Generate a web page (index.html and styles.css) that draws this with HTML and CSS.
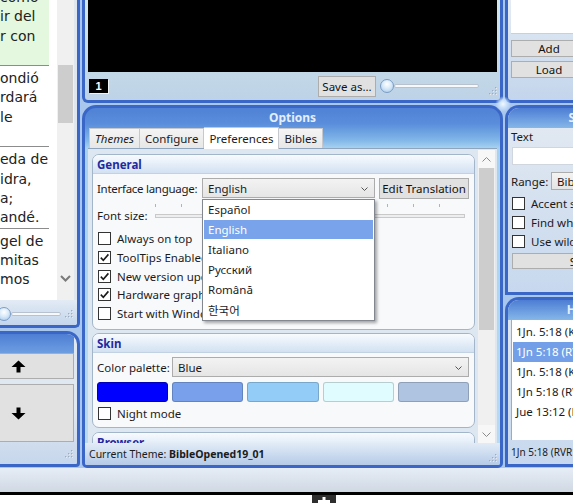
FILE: index.html
```html
<!DOCTYPE html>
<html>
<head>
<meta charset="utf-8">
<link rel="stylesheet" href="styles.css">
</head>
<body>
<div class="app">
  <div class="col col-left">
    <section class="panel p-verses">
      <div class="verses-area">
        <div class="verses-clip">
          <div class="verses">
            <div class="verse current"><div>como</div><div>ir del</div><div>r con</div><div>&nbsp;</div></div>
            <div class="verse"><div>ondió</div><div>rdará</div><div>le</div><div>&nbsp;</div></div>
            <div class="verse"><div>eda de</div><div>idra,</div><div>a;</div><div>andé.</div></div>
            <div class="verse last"><div>gel de</div><div>mitas</div><div>mos</div></div>
          </div>
        </div>
        <div class="vscroll">
          <div class="vthumb"></div>
          <svg class="vdown" width="11" height="7" viewBox="0 0 11 7"><path d="M1 1 L5.5 5.5 L10 1" fill="none" stroke="#7a7a7a" stroke-width="2"/></svg>
        </div>
      </div>
      <div class="slider-strip">
        <div class="knob knob-left"></div>
        <div class="track track-left"></div>
        <svg class="grip" width="9" height="9" viewBox="0 0 9 9"><g fill="#fff"><rect x="7.5" y="1.5" width="1.5" height="1.5"/><rect x="7.5" y="4.5" width="1.5" height="1.5"/><rect x="4.5" y="4.5" width="1.5" height="1.5"/><rect x="7.5" y="7.5" width="1.5" height="1.5"/><rect x="4.5" y="7.5" width="1.5" height="1.5"/><rect x="1.5" y="7.5" width="1.5" height="1.5"/></g><g fill="#9aabc2"><rect x="7" y="1" width="1.5" height="1.5"/><rect x="7" y="4" width="1.5" height="1.5"/><rect x="4" y="4" width="1.5" height="1.5"/><rect x="7" y="7" width="1.5" height="1.5"/><rect x="4" y="7" width="1.5" height="1.5"/><rect x="1" y="7" width="1.5" height="1.5"/></g></svg>
      </div>
    </section>
    <section class="panel p-nav">
      <div class="nav-head"></div>
      <button class="btn nav-btn">
        <svg width="15" height="13" viewBox="0 0 15 13"><path d="M7.5 0.5 L14.5 7 L9.5 7 L9.5 12.5 L5.5 12.5 L5.5 7 L0.5 7 Z" fill="#000"/></svg>
      </button>
      <button class="btn nav-btn nav-down">
        <svg width="15" height="13" viewBox="0 0 15 13"><path d="M7.5 12.5 L14.5 6 L9.5 6 L9.5 0.5 L5.5 0.5 L5.5 6 L0.5 6 Z" fill="#000"/></svg>
      </button>
      <div class="nav-foot">
        <svg class="grip" width="9" height="9" viewBox="0 0 9 9"><g fill="#fff"><rect x="7.5" y="1.5" width="1.5" height="1.5"/><rect x="7.5" y="4.5" width="1.5" height="1.5"/><rect x="4.5" y="4.5" width="1.5" height="1.5"/><rect x="7.5" y="7.5" width="1.5" height="1.5"/><rect x="4.5" y="7.5" width="1.5" height="1.5"/><rect x="1.5" y="7.5" width="1.5" height="1.5"/></g><g fill="#9aabc2"><rect x="7" y="1" width="1.5" height="1.5"/><rect x="7" y="4" width="1.5" height="1.5"/><rect x="4" y="4" width="1.5" height="1.5"/><rect x="7" y="7" width="1.5" height="1.5"/><rect x="4" y="7" width="1.5" height="1.5"/><rect x="1" y="7" width="1.5" height="1.5"/></g></svg>
      </div>
    </section>
  </div>

  <div class="col col-center">
    <section class="panel p-video">
      <div class="screen"></div>
      <div class="vstrip">
        <div class="badge">1</div>
        <button class="btn save-btn">Save as...</button>
        <div class="knob knob-video"></div>
        <div class="track track-video"></div>
        <svg class="grip grip-video" width="9" height="9" viewBox="0 0 9 9"><g fill="#fff"><rect x="7.5" y="1.5" width="1.5" height="1.5"/><rect x="7.5" y="4.5" width="1.5" height="1.5"/><rect x="4.5" y="4.5" width="1.5" height="1.5"/><rect x="7.5" y="7.5" width="1.5" height="1.5"/><rect x="4.5" y="7.5" width="1.5" height="1.5"/><rect x="1.5" y="7.5" width="1.5" height="1.5"/></g><g fill="#9aabc2"><rect x="7" y="1" width="1.5" height="1.5"/><rect x="7" y="4" width="1.5" height="1.5"/><rect x="4" y="4" width="1.5" height="1.5"/><rect x="7" y="7" width="1.5" height="1.5"/><rect x="4" y="7" width="1.5" height="1.5"/><rect x="1" y="7" width="1.5" height="1.5"/></g></svg>
      </div>
    </section>

    <section class="panel p-options">
      <div class="opt-title">Options</div>
      <div class="tabs">
        <div class="tab it">Themes</div>
        <div class="tab">Configure</div>
        <div class="tab sel">Preferences</div>
        <div class="tab">Bibles</div>
      </div>
      <div class="opt-body">
        <div class="groups">
          <div class="group g-general">
            <div class="group-head">General</div>
            <div class="row row-lang">
              <span class="lbl lbl-lang">Interface language:</span>
              <div class="combo combo-lang">
                <span>English</span>
                <svg class="chev" width="7" height="4" viewBox="0 0 7 4"><path d="M0.5 0.5 L3.5 3.5 L6.5 0.5" fill="none" stroke="#555" stroke-width="1"/></svg>
                <div class="dropdown">
                  <div class="dd-item">Español</div>
                  <div class="dd-item hl">English</div>
                  <div class="dd-item">Italiano</div>
                  <div class="dd-item">Русский</div>
                  <div class="dd-item">Română</div>
                  <div class="dd-item ko">한국어</div>
                </div>
              </div>
              <button class="btn edit-btn">Edit Translation</button>
            </div>
            <div class="row row-font">
              <span class="lbl lbl-font">Font size:</span>
              <div class="fslider">
                <div class="ticks"></div>
                <div class="ftrack"></div>
              </div>
            </div>
            <div class="checks">
              <div class="check"><span class="cb"></span><span>Always on top</span></div>
              <div class="check"><span class="cb"><svg width="11" height="11" viewBox="0 0 11 11"><path d="M1.8 5.6 L4.3 8.2 L9.4 2.4" fill="none" stroke="#1a1a1a" stroke-width="1.6"/></svg></span><span>ToolTips Enabled</span></div>
              <div class="check"><span class="cb"><svg width="11" height="11" viewBox="0 0 11 11"><path d="M1.8 5.6 L4.3 8.2 L9.4 2.4" fill="none" stroke="#1a1a1a" stroke-width="1.6"/></svg></span><span>New version update check</span></div>
              <div class="check"><span class="cb"><svg width="11" height="11" viewBox="0 0 11 11"><path d="M1.8 5.6 L4.3 8.2 L9.4 2.4" fill="none" stroke="#1a1a1a" stroke-width="1.6"/></svg></span><span>Hardware graphics acceleration</span></div>
              <div class="check"><span class="cb"></span><span>Start with Windows</span></div>
            </div>
          </div>

          <div class="group g-skin">
            <div class="group-head">Skin</div>
            <div class="row row-pal">
              <span class="lbl lbl-pal">Color palette:</span>
              <div class="combo combo-pal">
                <span>Blue</span>
                <svg class="chev" width="7" height="4" viewBox="0 0 7 4"><path d="M0.5 0.5 L3.5 3.5 L6.5 0.5" fill="none" stroke="#555" stroke-width="1"/></svg>
              </div>
            </div>
            <div class="swatches">
              <span class="sw sw1"></span>
              <span class="sw sw2"></span>
              <span class="sw sw3"></span>
              <span class="sw sw4"></span>
              <span class="sw sw5"></span>
            </div>
            <div class="check check-night"><span class="cb"></span><span>Night mode</span></div>
          </div>

          <div class="group g-browser">
            <div class="group-head">Browser</div>
          </div>
        </div>
        <div class="oscroll">
          <div class="sb-btn"><svg width="9" height="5" viewBox="0 0 9 5"><path d="M0.5 4.5 L4.5 0.5 L8.5 4.5" fill="none" stroke="#8a8a8a" stroke-width="1"/></svg></div>
          <div class="sb-thumb"></div>
          <div class="sb-track"></div>
          <div class="sb-btn"><svg width="9" height="5" viewBox="0 0 9 5"><path d="M0.5 0.5 L4.5 4.5 L8.5 0.5" fill="none" stroke="#8a8a8a" stroke-width="1"/></svg></div>
        </div>
      </div>
      <div class="opt-status">
        <span>Current Theme: <b>BibleOpened19_01</b></span>
        <svg class="grip" width="9" height="9" viewBox="0 0 9 9"><g fill="#fff"><rect x="7.5" y="1.5" width="1.5" height="1.5"/><rect x="7.5" y="4.5" width="1.5" height="1.5"/><rect x="4.5" y="4.5" width="1.5" height="1.5"/><rect x="7.5" y="7.5" width="1.5" height="1.5"/><rect x="4.5" y="7.5" width="1.5" height="1.5"/><rect x="1.5" y="7.5" width="1.5" height="1.5"/></g><g fill="#9aabc2"><rect x="7" y="1" width="1.5" height="1.5"/><rect x="7" y="4" width="1.5" height="1.5"/><rect x="4" y="4" width="1.5" height="1.5"/><rect x="7" y="7" width="1.5" height="1.5"/><rect x="4" y="7" width="1.5" height="1.5"/><rect x="1" y="7" width="1.5" height="1.5"/></g></svg>
      </div>
    </section>
  </div>

  <div class="col col-right">
    <section class="panel p-list">
      <div class="list-box"></div>
      <button class="btn side-btn add-btn">Add</button>
      <button class="btn side-btn load-btn">Load</button>
    </section>
    <section class="panel p-search">
      <div class="side-title">Search</div>
      <div class="search-body">
        <div class="s-label">Text</div>
        <div class="s-input"></div>
        <div class="s-range">
          <span class="lbl-range">Range:</span>
          <div class="combo combo-range"><span>Bible</span></div>
        </div>
        <div class="s-checks">
          <div class="check"><span class="cb"></span><span>Accent sensitive</span></div>
          <div class="check"><span class="cb"></span><span>Find whole words only</span></div>
          <div class="check"><span class="cb"></span><span>Use wildcards</span></div>
        </div>
        <button class="btn s-btn">Search</button>
      </div>
    </section>
    <section class="panel p-history">
      <div class="side-title">History</div>
      <div class="hist-body">
        <div class="hist-list">
          <div class="h-item">1Jn. 5:18 (KJV)</div>
          <div class="h-item hl">1Jn 5:18 (RVR1960)</div>
          <div class="h-item">1Jn. 5:18 (KJV)</div>
          <div class="h-item">1Jn 5:18 (RVR1960)</div>
          <div class="h-item">Jue 13:12 (RVR1960)</div>
        </div>
        <div class="hist-status">1Jn 5:18 (RVR1960)</div>
      </div>
    </section>
  </div>
  <div class="glow"></div>
</div>
<div class="win-bottom"></div>
<div class="task-line"></div>
<div class="taskbar">
  <svg class="plus" width="24" height="8" viewBox="0 0 24 8"><rect width="24" height="8" fill="#2e2e2e"/><rect x="10.5" y="2" width="3" height="6" fill="#fff"/><rect x="6" y="5" width="12" height="3" fill="#fff"/></svg>
</div>
</body>
</html>
```

FILE: styles.css
```css
* { box-sizing: border-box; }
html, body { margin: 0; padding: 0; }
body {
  width: 573px;
  height: 503px;
  overflow: hidden;
  background: #fff;
  font-family: "Noto Sans", "Open Sans", sans-serif;
  font-size: 11.5px;
  color: #1b1b1b;
}

.app {
  display: flex;
  height: 468px;
  background: #a9c6ec;
  position: relative;
}
.col { display: flex; flex-direction: column; gap: 2px; flex: none; }
.col-left { width: 80px; margin-right: 2px; gap: 3px; }
.col-center { width: 421px; margin-right: 2px; }
.col-right { width: 164px; }

.panel {
  flex: none;
  border: 3px solid #3a67c7;
  position: relative;
  overflow: hidden;
}

/* ---------- buttons / generic ---------- */
.btn {
  font-family: inherit;
  font-size: 11.5px;
  color: #111;
  background: #e1e1e1;
  border: 1px solid #adadad;
  padding: 0;
  margin: 0;
  display: flex;
  align-items: center;
  justify-content: center;
  flex: none;
  white-space: nowrap;
}
.knob {
  flex: none;
  width: 14px;
  height: 14px;
  border-radius: 50%;
  border: 1px solid #7b9cc6;
  background: radial-gradient(circle at 50% 35%, #ffffff 0, #d9eaf9 45%, #9ec5ea 100%);
}
.track {
  flex: none;
  height: 4px;
  border: 1px solid #b8c2ce;
  border-radius: 2px;
  background: #f6f8fa;
}
.grip { flex: none; display: block; }

/* ---------- left: verses ---------- */
.p-verses {
  height: 328px;
  border-top: 0;
  border-left: 0;
  border-radius: 0 0 5px 0;
  background: #dfe6ee;
}
.verses-area { display: flex; width: 74px; height: 300px; background: #fff; }
.verses-clip { width: 49px; height: 300px; overflow: hidden; flex: none; }
.verses {
  margin-top: -14px;
  font-family: "DejaVu Sans", "Liberation Sans", sans-serif;
  font-size: 14px;
  line-height: 19.3px;
  color: #222;
  white-space: nowrap;
}
.verse { padding-top: 3px; border-bottom: 1px solid #8c8c8c; }
.verse.current { background: #e3f8df; padding-top: 2px; }
.verse.last { border-bottom: 0; }
.vscroll {
  width: 17px;
  margin-left: 8px;
  background: #f0f0f0;
  display: flex;
  flex-direction: column;
  align-items: center;
  flex: none;
}
.vthumb { width: 15px; height: 58px; margin-top: 65px; background: #cdcdcd; }
.vdown { margin-top: auto; margin-bottom: 18px; }

.slider-strip {
  height: 25px;
  display: flex;
  align-items: center;
  padding: 2px 4px 0 0;
  background: linear-gradient(#e3ebf5, #c4d5ec);
}
.knob-left { margin-left: -3px; }
.track-left { width: 50px; }
.slider-strip .grip { margin-left: auto; }

/* ---------- left: nav ---------- */
.p-nav {
  height: 136px;
  width: 118px;
  margin-left: -38px;
  border-left: 0;
  border-radius: 0 13px 4px 0;
  padding-right: 3px;
  background: linear-gradient(#dfe7f1 60%, #c6d6ec);
}
.nav-head { height: 19px; background: linear-gradient(#4d7ed4, #6d9ee1); }
.nav-btn { width: 112px; height: 26px; }
.nav-down { height: 58px; margin-top: 5px; }
.nav-foot {
  height: 22px;
  display: flex;
  align-items: center;
  justify-content: flex-end;
  padding-right: 1px;
}

/* ---------- center: video ---------- */
.p-video {
  height: 103px;
  border-top: 0;
  border-radius: 0 0 6px 6px;
  padding: 0 3px;
  background: linear-gradient(#d3e8ea, #bdd2e6);
}
.screen { height: 72px; background: #000; }
.vstrip { height: 28px; display: flex; align-items: center; }
.badge {
  margin-left: 1px;
  width: 19px;
  height: 14px;
  background: #000;
  color: #fff;
  font-family: "Liberation Sans", sans-serif;
  font-weight: bold;
  font-size: 11px;
  display: flex;
  align-items: center;
  justify-content: center;
  box-shadow: 1px 1px 0 #eef4f6;
}
.save-btn { margin-left: auto; width: 58px; height: 21px; }
.knob-video { margin-left: 4px; }
.track-video { width: 85px; }
.grip-video { margin-left: 9px; margin-top: 8px; }

/* ---------- center: options ---------- */
.p-options {
  height: 363px;
  border-radius: 14px 14px 5px 5px;
  display: flex;
  flex-direction: column;
  background: linear-gradient(#5081d5 0, #5a8edb 16px, #80b6e7 32px, #a6d2f0 40px, #b9dbf1 100%);
}
.opt-title {
  height: 19px;
  line-height: 19px;
  text-align: center;
  font-weight: bold;
  font-size: 12px;
  color: #e4eefc;
  flex: none;
}
.tabs {
  height: 21px;
  display: flex;
  align-items: flex-end;
  padding-left: 4px;
  position: relative;
  z-index: 1;
  flex: none;
}
.tab {
  height: 20px;
  line-height: 19px;
  padding: 0 5px;
  border: 1px solid #c5c9ce;
  border-bottom: 0;
  border-left: 0;
  background: linear-gradient(#f4f4f4, #e7e7e7);
  white-space: nowrap;
}
.tab:first-child { border-left: 1px solid #c5c9ce; }
.tab.it { font-style: italic; }
.tab.sel { height: 22px; background: #fff; margin-bottom: -1px; line-height: 21px; }

.opt-body {
  flex: none;
  display: flex;
  height: 295px;
  margin: 0 3px;
  border-top: 1px solid #8fa5be;
  background: #dde7f1;
  padding: 5px 2px 0 4px;
}
.groups {
  width: 383px;
  flex: none;
  overflow: hidden;
  display: flex;
  flex-direction: column;
  gap: 3px;
}
.group {
  flex: none;
  border: 1px solid #a3b5c9;
  border-radius: 7px;
  background: #f8f9fb;
  overflow: hidden;
}
.group-head {
  height: 19px;
  line-height: 19px;
  padding-left: 4px;
  font-weight: bold;
  color: #1f2aa0;
  background: linear-gradient(#f8fbfe, #d2e1f2);
  border-bottom: 1px solid #c3d2e2;
}
.g-general { height: 176px; }
.g-skin { height: 95px; }
.g-browser { height: 40px; margin-top: 1px; }

.row { display: flex; align-items: center; padding: 0 5px 0 4px; }
.lbl { flex: none; white-space: nowrap; }
.row-lang { margin-top: 4px; height: 20px; }
.lbl-lang { width: 105px; letter-spacing: -0.28px; }
.combo {
  position: relative;
  height: 20px;
  display: flex;
  align-items: center;
  padding-left: 5px;
  border: 1px solid #acacac;
  background: linear-gradient(#f3f3f3, #e5e5e5);
  flex: none;
  white-space: nowrap;
}
.combo .chev { position: absolute; right: 6px; top: 8px; }
.combo-lang { width: 173px; }
.edit-btn { margin-left: 4px; width: 90px; height: 21px; }

.dropdown {
  position: absolute;
  left: -1px;
  top: 20px;
  width: 173px;
  height: 122px;
  background: #fff;
  border: 1px solid #828790;
  box-shadow: 2px 2px 3px rgba(0, 0, 0, 0.35);
  z-index: 5;
}
.dd-item { height: 20px; line-height: 20px; padding-left: 4px; margin: 0 1px; }
.dd-item.hl { background: #79a3ea; color: #fff; height: 19px; line-height: 19px; margin-bottom: 1px; }
.dd-item.ko { font-family: "Noto Sans CJK KR", "Noto Sans", sans-serif; }

.row-font { margin-top: 6px; height: 24px; }
.lbl-font { width: 58px; align-self: flex-start; line-height: 24px; }
.fslider { flex: 1; height: 24px; position: relative; margin-right: 4px; }
.ticks {
  height: 3px;
  background: repeating-linear-gradient(to right, #b3b3b3 0, #b3b3b3 1px, transparent 1px, transparent 25.8px);
}
.ftrack {
  margin-top: 7px;
  height: 4px;
  border: 1px solid #c9c9c9;
  background: #eceef0;
}

.checks { margin-top: 1.5px; }
.check { display: flex; align-items: center; height: 18.7px; padding-left: 5px; white-space: nowrap; }
.cb {
  flex: none;
  width: 13px;
  height: 13px;
  border: 1px solid #333;
  background: #fff;
  margin-right: 6px;
  display: flex;
  align-items: center;
  justify-content: center;
}
.cb svg { display: block; }

.row-pal { margin-top: 4px; height: 20px; }
.lbl-pal { width: 75px; }
.combo-pal { flex: 1; }
.swatches { display: flex; gap: 4px; padding: 0 5px 0 4px; margin-top: 5px; height: 20px; }
.sw { flex: 1; border-radius: 3px; border: 1px solid rgba(0, 0, 0, 0.18); }
.sw1 { background: #0000ff; border-color: #0000b8; }
.sw2 { background: #78a0eb; }
.sw3 { background: #93ccf6; }
.sw4 { background: #e0fcff; }
.sw5 { background: #aec4e1; }
.check-night { margin-top: 1px; height: 20px; }

.oscroll {
  width: 17px;
  flex: none;
  margin-left: 3px;
  margin-top: -4px;
  background: #f0f0f0;
  display: flex;
  flex-direction: column;
}
.sb-btn { height: 18px; display: flex; align-items: center; justify-content: center; background: #f7f7f7; flex: none; }
.sb-thumb { height: 162px; margin: 0 1px; background: #cdcdcd; flex: none; }
.sb-track { flex: 1; }

.opt-status {
  flex: none;
  height: 22px;
  display: flex;
  align-items: center;
  justify-content: space-between;
  padding: 0 3px 0 4px;
  font-size: 10.5px;
  white-space: nowrap;
  background: linear-gradient(#e2ecf7, #b5cbe8);
}
.opt-status .grip { margin-top: 6px; }

/* ---------- right column ---------- */
.p-list {
  height: 103px;
  border-top: 0;
  border-right: 0;
  border-radius: 0 0 0 6px;
  padding: 0 3px;
  background: linear-gradient(#e4ebf4, #c3d5ec);
}
.list-box { height: 34px; background: #fff; border-bottom: 1px solid #c9d0d8; }
.side-btn { width: 76px; height: 17px; }
.add-btn { margin-top: 6px; }
.load-btn { margin-top: 4px; }

.p-search, .p-history {
  border-right: 0;
  border-radius: 14px 0 0 0;
  display: flex;
  flex-direction: column;
}
.p-search { height: 190px; background: linear-gradient(#e4eaf2, #c7d8ee); }
.p-history { height: 170px; background: linear-gradient(#e4eaf2, #c7d8ee); }
.side-title {
  flex: none;
  height: 20px;
  line-height: 20px;
  text-align: center;
  font-weight: bold;
  font-size: 12px;
  color: #e6effc;
  background: linear-gradient(#4c7dd4, #86b7e8);
}
.search-body { padding: 0 3px; }
.s-label { margin-top: 1px; height: 16px; line-height: 16px; }
.s-input { margin: 2px 0 0 1px; height: 18px; background: #fff; border: 1px solid #d0d6de; }
.s-range { margin-top: 7px; height: 18px; display: flex; align-items: center; }
.lbl-range { width: 40px; flex: none; }
.combo-range { height: 18px; flex: 1; }
.s-checks { margin-top: 3.5px; }
.s-checks .check { height: 19px; padding-left: 1px; }
.s-btn { margin: 2.5px 0 0 1px; height: 16px; width: 152px; }

.hist-body { padding: 0 3px; flex: 1; display: flex; flex-direction: column; }
.hist-list {
  height: 120px;
  background: #fff;
  border-left: 1px solid #a9a9a9;
  padding-top: 2px;
  flex: none;
}
.h-item { height: 20px; line-height: 20px; padding-left: 3px; margin-left: 1px; white-space: nowrap; }
.h-item.hl { background: #739fe8; color: #fff; }
.hist-status { flex: 1; display: flex; align-items: center; font-size: 10px; white-space: nowrap; }

.glow {
  position: absolute;
  left: 495px;
  top: 96px;
  width: 16px;
  height: 16px;
  background: radial-gradient(circle, #f2f8ff 0, rgba(205, 228, 252, 0.85) 35%, rgba(169, 198, 236, 0) 70%);
}

/* ---------- window bottom ---------- */
.win-bottom { height: 24px; background: linear-gradient(#e6edf6, #d0d8e3); }
.task-line { height: 3px; background: #000; }
.taskbar { height: 8px; background: #fff; position: relative; }
.plus { position: absolute; left: 312px; top: 0; display: block; }
```
